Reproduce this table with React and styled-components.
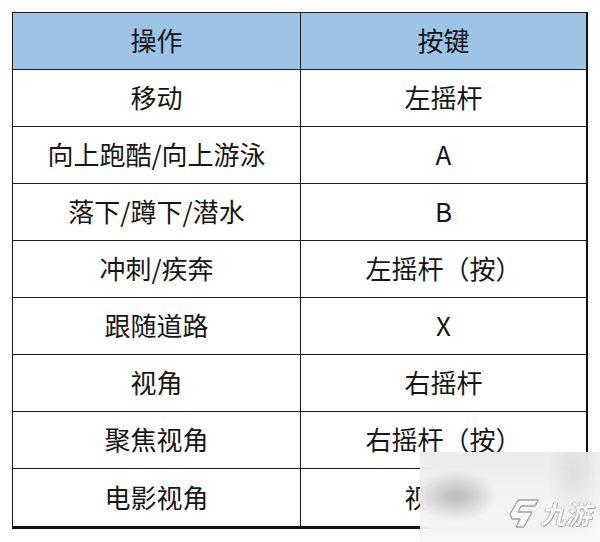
import React from 'react';
import styled, { createGlobalStyle } from 'styled-components';

const GlobalStyle = createGlobalStyle`
  body {
    margin: 0;
    background: #ffffff;
    font-family: "Noto Sans CJK SC", "Microsoft YaHei", sans-serif;
  }
`;

const rows = [
  ['移动', '左摇杆'],
  ['向上跑酷/向上游泳', 'A'],
  ['落下/蹲下/潜水', 'B'],
  ['冲刺/疾奔', '左摇杆（按）'],
  ['跟随道路', 'X'],
  ['视角', '右摇杆'],
  ['聚焦视角', '右摇杆（按）'],
  ['电影视角', '视角键'],
];

const Page = styled.div`
  position: relative;
  width: 600px;
  height: 542px;
  padding: 12px 0 0 12px;
  box-sizing: border-box;
  overflow: hidden;
`;

const Table = styled.div`
  display: grid;
  grid-template-columns: 288px 1fr;
  grid-template-rows: repeat(9, 1fr);
  width: 576px;
  height: 517px;
  box-sizing: border-box;
  border-top: 1.5px solid #1c1c1c;
  border-left: 1.5px solid #1c1c1c;
  border-right: 2px solid #111;
  border-bottom: 3px solid #111;
`;

const Cell = styled.div`
  display: flex;
  align-items: center;
  justify-content: center;
  font-size: 26px;
  color: #161616;
  background: ${(p) => (p.$head ? '#9dc3e6' : '#ffffff')};
  border-bottom: ${(p) => (p.$last ? 'none' : '1.5px solid #1c1c1c')};
  border-right: ${(p) => (p.$left ? '1.5px solid #1c1c1c' : 'none')};
  padding-bottom: 3px;
`;

const Watermark = styled.div`
  position: absolute;
  left: 420px;
  top: 452px;
  width: 180px;
  height: 90px;
  backdrop-filter: blur(8px);
  background:
    radial-gradient(ellipse 40px 26px at 36px 44px, rgba(140, 140, 140, 0.5), rgba(140, 140, 140, 0) 100%),
    radial-gradient(ellipse 26px 45px at 152px 22px, rgba(190, 190, 190, 0.35), rgba(190, 190, 190, 0) 100%),
    linear-gradient(180deg, rgba(234, 234, 234, 0.9), rgba(248, 248, 248, 0.9));
  display: flex;
  align-items: flex-end;
  justify-content: flex-end;
  padding: 0 7px 13px 0;
  box-sizing: border-box;
`;

const Logo = styled.div`
  display: flex;
  align-items: center;
  gap: 2px;
`;

const LogoText = styled.span`
  font-family: "Noto Sans CJK SC", sans-serif;
  font-size: 26px;
  line-height: 30px;
  font-weight: 700;
  color: #f6f6f6;
  transform: skewX(-14deg);
  text-shadow: 0 0 1px #8f8f8f, 1px 1px 0 #b0b0b0, -1px 0 0 #c4c4c4;
  letter-spacing: -1px;
`;

const LogoMark = () => (
  <svg width="34" height="32" viewBox="0 0 34 32">
    <path
      d="M11 3 H31 L28 9 H14 L11 15 H25 L17 30 H9 L13 22 H5 L3 17 Z"
      fill="#f6f6f6"
      stroke="#a2a2a2"
      strokeWidth="1.4"
      strokeLinejoin="round"
    />
  </svg>
);

export default function App() {
  return (
    <Page>
      <GlobalStyle />
      <Table>
        <Cell $head $left>操作</Cell>
        <Cell $head>按键</Cell>
        {rows.map(([action, key], i) => {
          const last = i === rows.length - 1;
          return (
            <React.Fragment key={action}>
              <Cell $left $last={last}>{action}</Cell>
              <Cell $last={last}>{key}</Cell>
            </React.Fragment>
          );
        })}
      </Table>
      <Watermark>
        <Logo>
          <LogoMark />
          <LogoText>九游</LogoText>
        </Logo>
      </Watermark>
    </Page>
  );
}
